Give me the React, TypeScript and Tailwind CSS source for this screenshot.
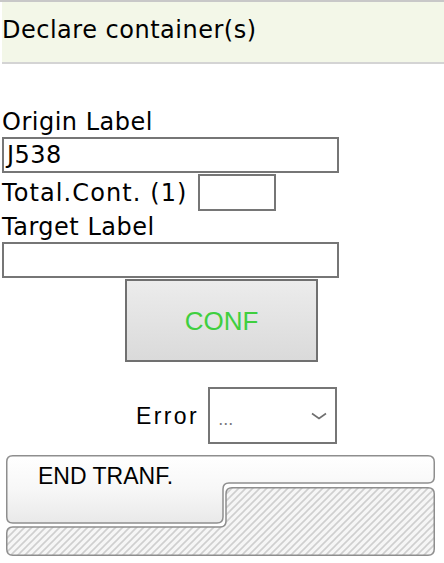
import React from "react";

function EndTranfShape() {
  return (
    <svg
      className="absolute inset-0"
      width="429"
      height="101"
      viewBox="0 0 429 101"
      aria-hidden="true"
    >
      <defs>
        <linearGradient id="whiteGrad" x1="0" y1="0" x2="0" y2="68" gradientUnits="userSpaceOnUse">
          <stop offset="0" stopColor="#ffffff" />
          <stop offset="0.5" stopColor="#f7f7f7" />
          <stop offset="1" stopColor="#e9e9e9" />
        </linearGradient>
        <pattern id="hatch" width="7" height="7" patternUnits="userSpaceOnUse">
          <rect width="7" height="7" fill="#f6f6f6" />
          <path d="M0,7 L7,0 M-2,2 L2,-2 M5,9 L9,5" stroke="#cfcfcf" strokeWidth="1.6" />
        </pattern>
      </defs>
      <path
        d="M226,32.75 H422 Q428.25,32.75 428.25,39 V94 Q428.25,100.25 422,100.25 H6.75 Q0.75,100.25 0.75,94 V78 Q0.75,72 6.75,72 H214 Q220,72 220,66 V38.75 Q220,32.75 226,32.75 Z"
        fill="url(#hatch)"
        stroke="#8e8e8e"
        strokeWidth="1.5"
      />
      <path
        d="M6.75,0.75 H422 Q428.25,0.75 428.25,7 V22 Q428.25,28 422,28 H223 Q217,28 217,34 V62 Q217,68 211,68 H6.75 Q0.75,68 0.75,62 V6.75 Q0.75,0.75 6.75,0.75 Z"
        fill="url(#whiteGrad)"
        stroke="#8e8e8e"
        strokeWidth="1.5"
      />
    </svg>
  );
}

export default function App() {
  return (
    <div className="w-[444px] h-[563px] bg-white border-t-2 border-[#c8c8c8] font-['DejaVu_Sans',sans-serif] text-black overflow-hidden">
      <div className="ml-[2px] h-[62px] bg-[#f3f7e8] border-b-2 border-[#d4d4d4] pt-[16px] text-[24px] leading-[24px] tracking-[0.5px]">
        Declare container(s)
      </div>

      <div className="pl-[2px] flex flex-col items-start">
        <div className="mt-[46px] text-[24px] leading-[24px] tracking-[0.5px]">Origin Label</div>
        <div className="mt-[3px] w-[337px] h-[36px] border-2 border-[#767676] pl-[3px] flex items-center text-[24px] leading-[24px] tracking-[0.5px]">
          J538
        </div>

        <div className="mt-[1px] flex items-center">
          <span className="text-[24px] leading-[24px] tracking-[1.1px]">Total.Cont. (1)</span>
          <div className="ml-[10px] w-[78px] h-[37px] border-2 border-[#767676]" />
        </div>

        <div className="mt-[4px] text-[24px] leading-[24px] tracking-[0.5px]">Target Label</div>
        <div className="mt-[3px] w-[337px] h-[36px] border-2 border-[#767676]" />

        <div className="mt-[1px] ml-[123px] w-[193px] h-[83px] border-2 border-[#707070] bg-gradient-to-b from-[#ececec] to-[#dadada] flex items-center justify-center">
          <span className="font-['Liberation_Sans',Arial,sans-serif] text-[26px] leading-[26px] text-[#3fcf3f]">CONF</span>
        </div>

        <div className="mt-[25px] flex items-center">
          <span className="ml-[134px] font-['Liberation_Sans',Arial,sans-serif] text-[23px] leading-[24px] tracking-[2.4px]">Error</span>
          <div className="ml-[9px] w-[129px] h-[57px] border-2 border-[#767676] flex items-center justify-between pl-[8px] pr-[8px]">
            <span className="font-['Liberation_Sans',Arial,sans-serif] text-[18px] leading-[18px] text-[#7a7a7a] mt-[6px]">...</span>
            <svg width="16" height="8" viewBox="0 0 16 8" aria-hidden="true">
              <path d="M1,1.5 L8,6.5 L15,1.5" fill="none" stroke="#6f6f6f" strokeWidth="1.6" />
            </svg>
          </div>
        </div>

        <div className="mt-[11px] ml-[4px] relative w-[429px] h-[101px]">
          <EndTranfShape />
          <div className="relative pl-[32px] pt-[9px] font-['Liberation_Sans',Arial,sans-serif] text-[23px] leading-[24px]">
            END TRANF.
          </div>
        </div>
      </div>
    </div>
  );
}
